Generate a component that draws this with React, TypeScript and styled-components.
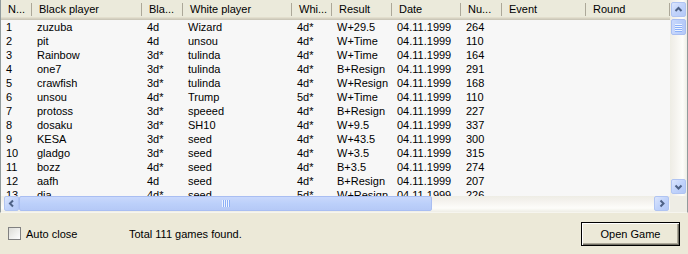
import React from "react";
import styled, { createGlobalStyle } from "styled-components";

const Global = createGlobalStyle`
  html, body { margin: 0; padding: 0; background: #ECE9D8; }
  body { font-family: Tahoma, "Liberation Sans", Arial, sans-serif; font-size: 11px; color: #000; }
  * { box-sizing: border-box; }
`;

type Col = { title: string; width: number };
const columns: Col[] = [
  { title: "N...", width: 31 },
  { title: "Black player", width: 110 },
  { title: "Bla...", width: 41 },
  { title: "White player", width: 109 },
  { title: "Whi...", width: 40 },
  { title: "Result", width: 60 },
  { title: "Date", width: 69 },
  { title: "Nu...", width: 41 },
  { title: "Event", width: 84 },
  { title: "Round", width: 84 },
];

const rows: string[][] = [
  ["1", "zuzuba", "4d", "Wizard", "4d*", "W+29.5", "04.11.1999", "264"],
  ["2", "pit", "4d", "unsou", "4d*", "W+Time", "04.11.1999", "110"],
  ["3", "Rainbow", "3d*", "tulinda", "4d*", "W+Time", "04.11.1999", "164"],
  ["4", "one7", "3d*", "tulinda", "4d*", "B+Resign", "04.11.1999", "291"],
  ["5", "crawfish", "3d*", "tulinda", "4d*", "W+Resign", "04.11.1999", "168"],
  ["6", "unsou", "4d*", "Trump", "5d*", "W+Time", "04.11.1999", "110"],
  ["7", "protoss", "3d*", "speeed", "4d*", "B+Resign", "04.11.1999", "227"],
  ["8", "dosaku", "3d*", "SH10", "4d*", "W+9.5", "04.11.1999", "337"],
  ["9", "KESA", "3d*", "seed", "4d*", "W+43.5", "04.11.1999", "300"],
  ["10", "gladgo", "3d*", "seed", "4d*", "W+3.5", "04.11.1999", "315"],
  ["11", "bozz", "4d*", "seed", "4d*", "B+3.5", "04.11.1999", "274"],
  ["12", "aafh", "4d", "seed", "4d*", "B+Resign", "04.11.1999", "207"],
  ["13", "dia", "4d*", "seed", "5d*", "W+Resign", "04.11.1999", "226"],
];

const Page = styled.div`
  width: 688px;
  height: 254px;
  display: flex;
  flex-direction: column;
  background: #ECE9D8;
`;

const Frame = styled.div`
  height: 213px;
  display: grid;
  grid-template-columns: 669px 17px;
  grid-template-rows: 196px 16px;
  border-left: 1px solid #919B9C;
  border-right: 1px solid #919B9C;
  border-bottom: 1px solid #F6F5EF;
  background: #F7F7F7;
`;

const TableArea = styled.div`
  overflow: hidden;
  background: #F7F7F7;
`;

const HeaderRow = styled.div`
  display: flex;
  height: 20px;
  background: #EBEADB;
  box-shadow: inset 0 -1px 0 #CBC7B8, inset 0 -2px 0 #D6D2C2, inset 0 -3px 0 #E2DECD;
`;

const HeaderCell = styled.div<{ $w: number }>`
  position: relative;
  width: ${(p) => p.$w}px;
  flex: none;
  padding: 0 0 0 7px;
  line-height: 18px;
  white-space: nowrap;
  overflow: hidden;
  &::after {
    content: "";
    position: absolute;
    right: 0;
    top: 3px;
    height: 13px;
    width: 1px;
    background: #ACA899;
    box-shadow: 1px 0 0 #FFFFFF;
  }
`;

const Row = styled.div`
  display: flex;
  height: 14px;
`;

const Cell = styled.div<{ $w: number }>`
  width: ${(p) => p.$w}px;
  flex: none;
  padding-left: 5px;
  line-height: 14px;
  white-space: nowrap;
  overflow: hidden;
`;

const VScroll = styled.div`
  display: flex;
  flex-direction: column;
  padding: 2px 1px 2px 1px;
  background: linear-gradient(to right, #EEEDE5, #F3F1EC 25%, #FDFDFA 75%, #EEEDE5);
`;

const HScroll = styled.div`
  display: flex;
  align-items: stretch;
  padding: 0 1px 1px 3px;
  background: linear-gradient(to bottom, #EEEDE5, #F3F1EC 25%, #FDFDFA 75%, #EEEDE5);
`;

const Corner = styled.div`
  background: #EEEDE5;
`;

const ScrollButton = styled.div`
  width: 15px;
  height: 15px;
  flex: none;
  border: 1px solid #B0C4F2;
  border-radius: 2px;
  background: linear-gradient(135deg, #DCE6FD, #C1D3FB 50%, #B3C8F6);
  display: flex;
  align-items: center;
  justify-content: center;
`;

const VThumb = styled.div`
  margin-top: 2px;
  width: 15px;
  height: 16px;
  border: 1px solid #A9BEF2;
  border-radius: 2px;
  background: linear-gradient(to right, #C9D8FC, #BCD0FA 50%, #B5C9F7);
  display: flex;
  flex-direction: column;
  align-items: center;
  justify-content: center;
  gap: 1px;
`;

const VGrip = styled.div`
  width: 7px;
  height: 1px;
  background: #EEF4FE;
  box-shadow: 0 1px 0 #8CB0F8;
`;

const Spacer = styled.div`
  flex: 1;
`;

const HThumb = styled.div`
  margin-left: 0px;
  width: 413px;
  height: 15px;
  flex: none;
  border: 1px solid #A9BEF2;
  border-radius: 2px;
  background: linear-gradient(to bottom, #C9D8FC, #BCD0FA 50%, #B5C9F7);
  display: flex;
  align-items: center;
  justify-content: center;
  gap: 1px;
`;

const HGrip = styled.div`
  width: 1px;
  height: 7px;
  background: #EEF4FE;
  box-shadow: 1px 0 0 #8CB0F8;
`;

const Bottom = styled.div`
  flex: 1;
  display: grid;
  grid-template-columns: 121px 1fr auto;
  align-items: center;
  padding: 0 8px 0 8px;
`;

const CheckLabel = styled.label`
  display: flex;
  align-items: center;
  gap: 5px;
`;

const CheckBox = styled.span`
  width: 13px;
  height: 13px;
  border: 1px solid #808080;
  background: linear-gradient(135deg, #DCDCD7, #FFFFFF);
`;

const Status = styled.span``;

const Button = styled.button`
  width: 99px;
  height: 24px;
  margin-top: 1px;
  font: inherit;
  font-size: 11px;
  color: #000;
  background: #ECE9D8;
  border: 1px solid #000;
  box-shadow: inset 1px 1px 0 #FFFFFF, inset -1px -1px 0 #716F64, inset -2px -2px 0 #ACA899;
  padding: 0;
`;

const Arrow = ({ dir }: { dir: "up" | "down" | "left" | "right" }) => {
  const d = {
    up: "M1.5 5 L4.5 2 L7.5 5",
    down: "M1.5 2.5 L4.5 5.5 L7.5 2.5",
    left: "M5 1.5 L2 4.5 L5 7.5",
    right: "M2.5 1.5 L5.5 4.5 L2.5 7.5",
  }[dir];
  const horiz = dir === "left" || dir === "right";
  return (
    <svg width={horiz ? 7 : 9} height={horiz ? 9 : 7} viewBox={horiz ? "0 0 7 9" : "0 0 9 7"}>
      <path d={d} fill="none" stroke="#4D6185" strokeWidth="2" />
    </svg>
  );
};

export default function App() {
  return (
    <>
      <Global />
      <Page>
        <Frame>
          <TableArea>
            <HeaderRow>
              {columns.map((c) => (
                <HeaderCell key={c.title} $w={c.width}>
                  {c.title}
                </HeaderCell>
              ))}
            </HeaderRow>
            {rows.map((r) => (
              <Row key={r[0]}>
                {columns.map((c, i) => (
                  <Cell key={c.title} $w={c.width}>
                    {r[i] ?? ""}
                  </Cell>
                ))}
              </Row>
            ))}
          </TableArea>
          <VScroll>
            <ScrollButton>
              <Arrow dir="up" />
            </ScrollButton>
            <VThumb>
              <VGrip />
              <VGrip />
              <VGrip />
              <VGrip />
            </VThumb>
            <Spacer />
            <ScrollButton>
              <Arrow dir="down" />
            </ScrollButton>
          </VScroll>
          <HScroll>
            <ScrollButton>
              <Arrow dir="left" />
            </ScrollButton>
            <HThumb>
              <HGrip />
              <HGrip />
              <HGrip />
              <HGrip />
            </HThumb>
            <Spacer />
            <ScrollButton>
              <Arrow dir="right" />
            </ScrollButton>
          </HScroll>
          <Corner />
        </Frame>
        <Bottom>
          <CheckLabel>
            <CheckBox />
            Auto close
          </CheckLabel>
          <Status>Total 111 games found.</Status>
          <Button>Open Game</Button>
        </Bottom>
      </Page>
    </>
  );
}
